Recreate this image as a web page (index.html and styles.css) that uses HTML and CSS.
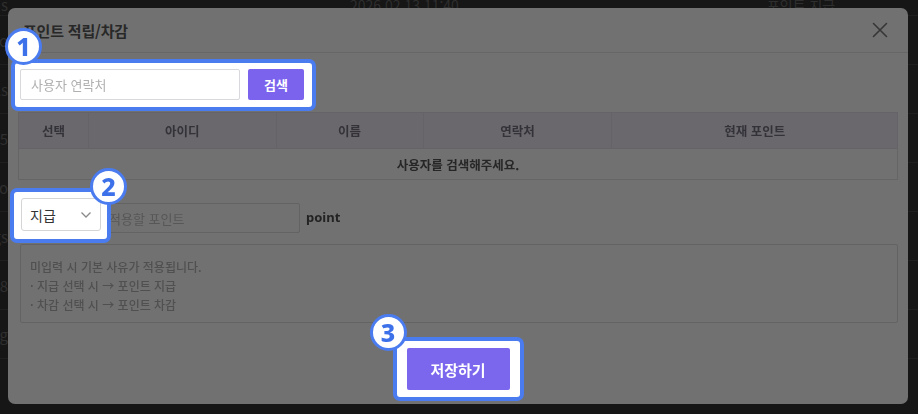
FILE: index.html
```html
<!DOCTYPE html>
<html lang="ko">
<head>
<meta charset="utf-8">
<title>포인트 적립/차감</title>
<link rel="stylesheet" href="styles.css">
</head>
<body>
<div class="bg-page">
  <div class="bg-row bg-top"><span class="bg-left">s</span><span class="bg-date">2026.02.13 11:40</span><span class="bg-type">포인트 지급</span></div>
  <div class="bg-row"><span class="bg-left">info</span></div>
  <div class="bg-row"><span class="bg-left">details</span></div>
  <div class="bg-row"><span class="bg-left">2025</span></div>
  <div class="bg-row"><span class="bg-left">info</span></div>
  <div class="bg-row"><span class="bg-left">logs</span></div>
  <div class="bg-row"><span class="bg-left">2028</span></div>
  <div class="bg-row"><span class="bg-left">ng</span></div>
</div>

<div class="modal">
  <header class="modal-head">
    <h2 class="modal-title">포인트 적립/차감</h2>
    <button class="close-btn" aria-label="닫기">
      <svg width="16" height="16" viewBox="0 0 16 16"><path d="M1.5 1.5 L14.5 14.5 M14.5 1.5 L1.5 14.5" stroke="#363636" stroke-width="1.6" fill="none" stroke-linecap="round"/></svg>
    </button>
  </header>
  <div class="modal-body">
    <div class="hl hl-search">
      <span class="badge badge-1">1</span>
      <input class="search-input" type="text" placeholder="사용자 연락처">
      <button class="btn btn-search">검색</button>
    </div>

    <table class="user-table">
      <thead>
        <tr><th class="c1">선택</th><th class="c2">아이디</th><th class="c3">이름</th><th class="c4">연락처</th><th class="c5">현재 포인트</th></tr>
      </thead>
      <tbody>
        <tr><td colspan="5">사용자를 검색해주세요.</td></tr>
      </tbody>
    </table>

    <div class="point-row">
      <div class="hl hl-type">
        <span class="badge badge-2">2</span>
        <div class="select">
          <span>지급</span>
          <svg width="12" height="8" viewBox="0 0 12 8"><path d="M1.5 1.5 L6 6 L10.5 1.5" stroke="#8a8a8a" stroke-width="1.3" fill="none"/></svg>
        </div>
      </div>
      <input class="point-input" type="text" placeholder="적용할 포인트">
      <span class="unit">point</span>
    </div>

    <div class="memo">
      <p>미입력 시 기본 사유가 적용됩니다.</p>
      <p>· 지급 선택 시 → 포인트 지급</p>
      <p>· 차감 선택 시 → 포인트 차감</p>
    </div>

    <div class="footer">
      <div class="hl hl-save">
        <span class="badge badge-3">3</span>
        <button class="btn btn-save">저장하기</button>
      </div>
    </div>
  </div>
</div>
</body>
</html>
```

FILE: styles.css
```css
* { box-sizing: border-box; }

html, body {
  margin: 0;
  padding: 0;
  width: 918px;
  height: 414px;
  overflow: hidden;
  background: #161616;
  font-family: "Noto Sans CJK KR", "Noto Sans", sans-serif;
}

/* dimmed background page */
.bg-page {
  margin-top: -6px;
}
.bg-row {
  height: 49px;
  display: flex;
  align-items: center;
  position: relative;
  border-bottom: 1px solid #1f1f1f;
  color: #2e2e2e;
  font-size: 15px;
}
.bg-top {
  height: 22px;
}
.bg-left {
  width: 8px;
  display: flex;
  justify-content: flex-end;
  white-space: nowrap;
  overflow: hidden;
}
.bg-date {
  margin-left: 342px;
  font-size: 14px;
}
.bg-type {
  margin-left: 308px;
  font-size: 14px;
}

/* modal */
.modal {
  position: fixed;
  left: 8px;
  top: 8px;
  width: 900px;
  height: 396px;
  background: #717171;
  border-radius: 7px;
  display: flex;
  flex-direction: column;
}

.modal-head {
  height: 45px;
  flex: none;
  display: flex;
  align-items: center;
  justify-content: space-between;
  padding: 0 20px 0 15px;
  border-bottom: 1px solid #666666;
}
.modal-title {
  margin: 0;
  font-size: 15px;
  font-weight: 700;
  color: #282828;
  letter-spacing: -0.2px;
}
.close-btn {
  border: 0;
  background: none;
  padding: 0;
  width: 16px;
  height: 16px;
  display: flex;
}

.modal-body {
  padding: 6px 10px 0 10px;
  display: flex;
  flex-direction: column;
  align-items: flex-start;
}

/* highlight frames */
.hl {
  position: relative;
  z-index: 2;
  background: #ffffff;
  border: 4px solid #4a7cf0;
  border-radius: 7px;
  display: flex;
  align-items: center;
}
.badge {
  position: absolute;
  width: 37px;
  height: 37px;
  border-radius: 50%;
  background: #ffffff;
  border: 3px solid #4a7cf0;
  color: #3d71ea;
  font-family: "Noto Sans", "DejaVu Sans", sans-serif;
  font-weight: 800;
  font-size: 25px;
  line-height: 1;
  display: flex;
  align-items: center;
  justify-content: center;
  z-index: 3;
}

.hl-search {
  margin-left: -7px;
  padding: 6px 8px 7px 5px;
  gap: 8px;
}
.badge-1 { left: -10px; top: -35px; }

.search-input {
  width: 220px;
  height: 31px;
  border: 1px solid #d9d9dd;
  border-radius: 2px;
  padding: 0 10px;
  font-family: inherit;
  font-size: 13px;
  color: #333;
  outline: none;
}
.search-input::placeholder { color: #b0b0b0; }

.btn {
  border: 0;
  font-family: inherit;
  color: #ffffff;
  font-weight: 700;
  background: #7b63ee;
  border-radius: 2px;
}
.btn-search {
  width: 56px;
  height: 31px;
  font-size: 13px;
}

/* table */
.user-table {
  margin-top: 1px;
  width: 880px;
  border-collapse: collapse;
  font-size: 12.5px;
  color: #2f2f33;
}
.user-table th {
  height: 36px;
  background: #6a686d;
  border: 1px solid #656367;
  font-weight: 700;
  color: #333238;
  padding: 0;
}
.user-table td {
  height: 31px;
  border: 1px solid #656565;
  text-align: center;
  font-weight: 600;
  color: #262626;
  padding: 0;
}
.c1 { width: 70px; }
.c2 { width: 188px; }
.c3 { width: 147px; }
.c4 { width: 189px; }
.c5 { width: 286px; }

/* point row */
.point-row {
  margin-top: 8px;
  margin-left: -8px;
  display: flex;
  align-items: flex-start;
}
.hl-type {
  padding: 6px 6px 8px 7px;
}
.badge-2 { left: 76px; top: -24px; }

.select {
  width: 80px;
  height: 33px;
  border: 1px solid #d5d5d8;
  border-radius: 3px;
  padding: 0 8px 0 8px;
  display: flex;
  align-items: center;
  justify-content: space-between;
  font-size: 14px;
  color: #333333;
}

.point-input {
  margin-top: 15px;
  margin-left: -10px;
  width: 199px;
  height: 30px;
  border: 1px solid #636363;
  border-radius: 2px;
  background: transparent;
  padding: 0 0 0 7px;
  font-family: inherit;
  font-size: 13px;
  outline: none;
}
.point-input::placeholder { color: #575757; }

.unit {
  margin-top: 20px;
  margin-left: 6px;
  font-family: "Noto Sans", sans-serif;
  font-weight: 700;
  font-size: 13px;
  color: #232323;
}

/* memo */
.memo {
  margin-top: 1px;
  margin-left: 2px;
  width: 878px;
  height: 79px;
  border: 1px solid #636363;
  border-radius: 2px;
  padding: 12px 9px 0 9px;
  font-size: 12px;
  font-weight: 500;
  color: #505050;
}
.memo p {
  margin: 0;
  line-height: 19px;
}

/* footer */
.footer {
  margin-top: 14px;
  width: 880px;
  display: flex;
  justify-content: center;
}
.hl-save {
  padding: 7px 10px;
}
.badge-3 { left: -27px; top: -27px; }

.btn-save {
  width: 103px;
  height: 42px;
  font-size: 15px;
  background: #7b66ee;
}
```
